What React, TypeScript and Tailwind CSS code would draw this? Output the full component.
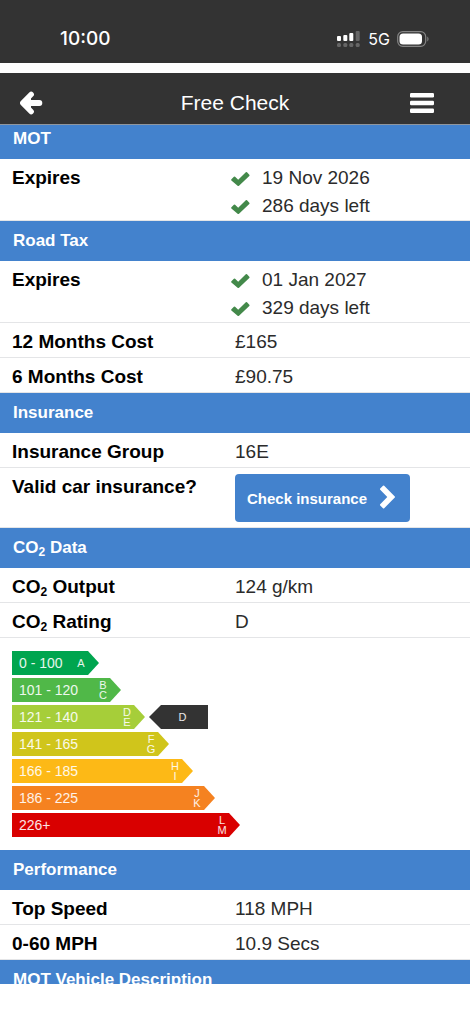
import React from 'react';

const bands = [
  { range: '0 - 100', letters: ['A'], width: 'w-[87px]', color: 'bg-[#00a54f]' },
  { range: '101 - 120', letters: ['B', 'C'], width: 'w-[109px]', color: 'bg-[#50b848]' },
  { range: '121 - 140', letters: ['D', 'E'], width: 'w-[133px]', color: 'bg-[#a6ce39]' },
  { range: '141 - 165', letters: ['F', 'G'], width: 'w-[157px]', color: 'bg-[#d0c51b]' },
  { range: '166 - 185', letters: ['H', 'I'], width: 'w-[181px]', color: 'bg-[#fdb916]' },
  { range: '186 - 225', letters: ['J', 'K'], width: 'w-[203px]', color: 'bg-[#f58220]' },
  { range: '226+', letters: ['L', 'M'], width: 'w-[228px]', color: 'bg-[#d90000]' },
];

function StatusBar() {
  return (
    <div className="flex h-[63px] items-end justify-between bg-[#333333] pr-10 pl-[60px] pb-3 text-white">
      <span className="font-['Inter',sans-serif] text-[19px] leading-6 font-medium">10:00</span>
      <div className="flex h-6 items-center gap-[7px]">
        <svg width="24" height="16" viewBox="0 0 24 16" fill="#fff" aria-hidden="true">
          <rect x="0" y="5" width="4" height="5" rx="1" />
          <rect x="6.3" y="4" width="4" height="6" rx="1" />
          <rect x="12.3" y="2" width="4" height="8" rx="1" />
          <rect x="18.7" y="0" width="4" height="10" rx="1" opacity="0.25" />
          <g opacity="0.25">
            <rect x="0" y="12" width="4" height="4" rx="1.5" />
            <rect x="6.3" y="12" width="4" height="4" rx="1.5" />
            <rect x="12.3" y="12" width="4" height="4" rx="1.5" />
            <rect x="18.7" y="12" width="4" height="4" rx="1.5" />
          </g>
        </svg>
        <span className="font-['Inter',sans-serif] text-base leading-6">5G</span>
        <svg width="33" height="16" viewBox="0 0 33 16" aria-hidden="true">
          <rect x="0.7" y="0.7" width="28" height="14.6" rx="5" fill="none" stroke="#858585" strokeWidth="1.2" />
          <rect x="2.5" y="2.5" width="22.5" height="11" rx="3.5" fill="#fff" />
          <path d="M30.3 5.5c1.6.7 1.6 4.3 0 5z" fill="#858585" />
        </svg>
      </div>
    </div>
  );
}

function NavBar() {
  return (
    <header className="mt-2.5 grid h-[52px] grid-cols-[1fr_auto_1fr] items-center border-b border-[#8f969e] bg-[#333333] px-5 pt-2 text-white">
      <button type="button" aria-label="Back" className="justify-self-start">
        <svg width="23" height="24" viewBox="0 0 23 24" fill="none" stroke="#fff" strokeWidth="5.4" strokeLinecap="round" strokeLinejoin="round" aria-hidden="true">
          <path d="M11.2 3.4 2.8 12l8.4 8.6" />
          <path d="M5 12h14.4" strokeWidth="5.8" />
          <path d="M4.5 12 10 7v10z" fill="#fff" strokeWidth="2" />
        </svg>
      </button>
      <h1 className="text-[21px] leading-7">Free Check</h1>
      <button type="button" aria-label="Menu" className="mr-4 justify-self-end">
        <svg width="24" height="20" viewBox="0 0 24 20" fill="#fff" aria-hidden="true">
          <rect x="0" y="0" width="24" height="4.5" rx="1.2" />
          <rect x="0" y="7.7" width="24" height="4.5" rx="1.2" />
          <rect x="0" y="15.4" width="24" height="4.5" rx="1.2" />
        </svg>
      </button>
    </header>
  );
}

function SectionTitle({ children }: { children: React.ReactNode }) {
  return (
    <h2 className="flex h-10 shrink-0 items-center bg-[#4382cd] px-[13px] text-[17px] leading-6 font-bold text-white">
      <span>{children}</span>
    </h2>
  );
}

function Row({ label, children }: { label: React.ReactNode; children: React.ReactNode }) {
  return (
    <div className="grid min-h-[35px] grid-cols-2 border-b border-[#e4e5e7] pt-[5px] text-[19px] leading-7">
      <dt className="pl-3 font-bold text-black">{label}</dt>
      <dd className="text-[#2b2b2b]">{children}</dd>
    </div>
  );
}

function Tick({ children }: { children: React.ReactNode }) {
  return (
    <div className="-ml-1 flex items-center gap-3">
      <svg width="19" height="16" viewBox="0 0 19 16" className="mt-0.5" fill="#43894a" aria-hidden="true">
        <path d="M.4 8.3 2.9 5.8q.6-.5 1.2 0L7.2 8.8 14.8 1.3q.6-.5 1.2 0l2.3 2.4q.5.6 0 1.2L8 14.8q-.7.6-1.4 0L.4 9.4q-.5-.5 0-1.1z" />
      </svg>
      <span>{children}</span>
    </div>
  );
}

function Co2() {
  return (
    <>
      CO<sub className="text-[12px] leading-0">2</sub>
    </>
  );
}

function RatingChart() {
  return (
    <div className="flex flex-col gap-[3px] px-3 py-[13px]">
      {bands.map((band) => (
        <div key={band.range} className="flex gap-1">
          <div
            className={`flex h-6 items-center justify-between pr-3 pl-[7px] text-white/90 [clip-path:polygon(0_0,calc(100%-11px)_0,100%_50%,calc(100%-11px)_100%,0_100%)] ${band.width} ${band.color}`}
          >
            <span className="text-sm leading-6">{band.range}</span>
            <span className="flex w-3 flex-col items-center text-[11px] leading-[10px]">
              {band.letters.map((letter) => (
                <span key={letter}>{letter}</span>
              ))}
            </span>
          </div>
          {band.letters.includes('D') && (
            <div className="flex h-6 w-[59px] items-center justify-center bg-[#333333] pl-2 text-[11px] text-white/90 [clip-path:polygon(12px_0,100%_0,100%_100%,12px_100%,0_50%)]">
              D
            </div>
          )}
        </div>
      ))}
    </div>
  );
}

export default function App() {
  return (
    <div className="min-h-screen bg-white font-['Liberation_Sans',Arial,sans-serif]">
      <StatusBar />
      <NavBar />
      <main>
        {/* first title is partly scrolled under the nav bar */}
        <div className="flex h-[34px] flex-col justify-end overflow-hidden">
          <SectionTitle>MOT</SectionTitle>
        </div>
        <dl>
          <Row label="Expires">
            <Tick>19 Nov 2026</Tick>
            <Tick>286 days left</Tick>
          </Row>
        </dl>

        <SectionTitle>Road Tax</SectionTitle>
        <dl>
          <Row label="Expires">
            <Tick>01 Jan 2027</Tick>
            <Tick>329 days left</Tick>
          </Row>
          <Row label="12 Months Cost">£165</Row>
          <Row label="6 Months Cost">£90.75</Row>
        </dl>

        <SectionTitle>Insurance</SectionTitle>
        <dl>
          <Row label="Insurance Group">16E</Row>
          <Row label="Valid car insurance?">
            <button
              type="button"
              className="mt-px mb-[5px] flex h-12 items-center gap-3 rounded-sm bg-[#4382cd] pt-0.5 pr-3.5 pl-3 text-[15px] font-bold text-white"
            >
              <span>Check insurance</span>
              <svg width="17" height="24" viewBox="0 0 17 24" fill="#fff" className="-mt-1" aria-hidden="true">
                <path d="M1.2 3.6 4 .7q.6-.6 1.2 0l10.6 10.7q.6.6 0 1.2L5.2 23.3q-.6.6-1.2 0l-2.8-2.9q-.6-.6 0-1.2L8.3 12 1.2 4.8q-.6-.6 0-1.2z" />
              </svg>
            </button>
          </Row>
        </dl>

        <SectionTitle>
          <Co2 /> Data
        </SectionTitle>
        <dl>
          <Row label={<><Co2 /> Output</>}>124 g/km</Row>
          <Row label={<><Co2 /> Rating</>}>D</Row>
        </dl>
        <RatingChart />

        <SectionTitle>Performance</SectionTitle>
        <dl>
          <Row label="Top Speed">118 MPH</Row>
          <Row label="0-60 MPH">10.9 Secs</Row>
        </dl>

        <div className="h-6 overflow-hidden">
          <SectionTitle>MOT Vehicle Description</SectionTitle>
        </div>
      </main>
    </div>
  );
}
